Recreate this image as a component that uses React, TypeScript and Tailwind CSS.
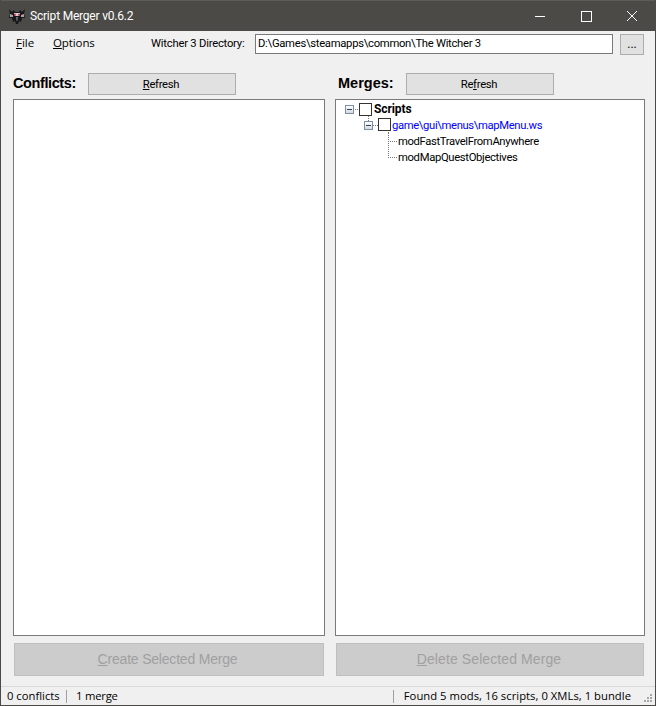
import React from "react";

const ui = "font-['Roboto',sans-serif]";
const lib = "font-['Liberation_Sans',sans-serif]";
const segoe = "font-['Open_Sans',sans-serif]";

function Logo() {
  return (
    <svg width="18" height="18" viewBox="0 0 18 18" className="shrink-0">
      <path d="M1 2 L4 5 L6 3 L7 5 L11 5 L12 3 L14 5 L17 2 L16 7 L17 11 L14 11 L13 15 L11 14 L10 17 L8 17 L7 14 L5 15 L4 11 L1 11 L2 7 Z" fill="#17171c" />
      <path d="M2 7 L5 8 L5 10 L2 10 Z M16 7 L13 8 L13 10 L16 10 Z" fill="#a5a5ad" />
      <path d="M6 6 L12 6 L11 9 L7 9 Z" fill="#d0d0d6" />
      <rect x="6" y="7" width="2" height="1.5" fill="#d8324a" />
      <rect x="10" y="7" width="2" height="1.5" fill="#d8324a" />
      <path d="M8 10 L10 10 L9.5 14 L8.5 14 Z" fill="#6f6f77" />
    </svg>
  );
}

function Expander({ className }: { className: string }) {
  return (
    <span className={`absolute w-[9px] h-[9px] border border-[#7f8ea3] bg-gradient-to-b from-white to-[#d5d9e0] flex items-center justify-center ${className}`}>
      <span className="block w-[5px] h-px bg-[#2b3f66]" />
    </span>
  );
}

function TreeBox({ className }: { className: string }) {
  return <span className={`absolute w-[13px] h-[13px] border border-[#333] bg-white ${className}`} />;
}

function Dots({ className }: { className: string }) {
  return <span className={`absolute border-dotted border-[#777] ${className}`} />;
}

function Tree() {
  return (
    <div className={`relative w-full h-full text-[11.25px] ${ui}`}>
      <Dots className="left-[17px] top-[9px] w-[7px] border-t" />
      <Dots className="left-[32px] top-[16px] h-[9px] border-l" />
      <Expander className="left-[9px] top-[5px]" />
      <TreeBox className="left-[23px] top-[3px]" />
      <span className="absolute left-[38px] top-[1px] text-[12px] leading-[16px] font-bold text-black tracking-[-0.1px]">Scripts</span>

      <Dots className="left-[37px] top-[25px] w-[5px] border-t" />
      <Dots className="left-[52px] top-[32px] h-[26px] border-l" />
      <Expander className="left-[28px] top-[21px]" />
      <TreeBox className="left-[42px] top-[18px]" />
      <span className="absolute left-[56px] top-[18px] leading-[16px] text-[#0000ff] tracking-[-0.36px]">game\gui\menus\mapMenu.ws</span>

      <Dots className="left-[52px] top-[41px] w-[9px] border-t" />
      <span className="absolute left-[62px] top-[34px] leading-[16px] text-black tracking-[-0.35px]">modFastTravelFromAnywhere</span>
      <Dots className="left-[52px] top-[57px] w-[9px] border-t" />
      <span className="absolute left-[62px] top-[50px] leading-[16px] text-black tracking-[-0.33px]">modMapQuestObjectives</span>
    </div>
  );
}

function RefreshButton({ children }: { children: React.ReactNode }) {
  return (
    <button className={`w-[148px] h-[22px] border border-[#adadad] bg-[#e1e1e1] pr-[2px] pt-px text-[11.25px] tracking-[-0.3px] leading-[20px] text-black text-center ${ui}`}>
      {children}
    </button>
  );
}

function BigButton({ children, className }: { children: React.ReactNode; className: string }) {
  return (
    <button className={`h-[33px] mx-px border border-[#bfbfbf] bg-[#cccccc] text-[14px] leading-[31px] text-[#a0a0a0] text-center ${lib} ${className}`}>
      {children}
    </button>
  );
}

export default function App() {
  return (
    <div className="w-[656px] h-[706px] flex flex-col bg-[#f0f0f0] overflow-hidden border border-t-0 border-[#4b4a47]">
      {/* title bar */}
      <div className="h-[31px] -mx-px bg-[#4b4a47] flex items-center shrink-0 border-t border-[#5d5c59]">
        <div className="pl-[8px] pr-[4px]"><Logo /></div>
        <span className={`text-[12px] text-white tracking-[-0.2px] ${ui}`}>Script Merger v0.6.2</span>
        <div className="ml-auto flex items-center text-white pr-px">
          <div className="w-[46px] h-[30px] flex items-center justify-center">
            <span className="block w-[10px] h-px bg-white" />
          </div>
          <div className="w-[46px] h-[30px] flex items-center justify-center">
            <span className="block w-[11px] h-[11px] border border-white" />
          </div>
          <div className="w-[46px] h-[30px] flex items-center justify-center">
            <svg width="12" height="12" viewBox="0 0 12 12"><path d="M1 1 L11 11 M11 1 L1 11" stroke="#fff" strokeWidth="1" /></svg>
          </div>
        </div>
      </div>

      {/* menu + directory */}
      <div className="h-[24px] flex items-center shrink-0 mt-[1px] pl-[15px] pr-[11px] text-[11.25px] text-black">
        <span className={`${segoe} leading-[16px] -mt-[2px] w-[37px] text-[11.5px]`}><u>F</u>ile</span>
        <span className={`${segoe} leading-[16px] -mt-[2px] w-[98px] text-[11.5px] tracking-[-0.1px]`}><u>O</u>ptions</span>
        <span className={`${ui} w-[104px] shrink-0 tracking-[-0.22px] whitespace-nowrap`}>Witcher 3 Directory:</span>
        <div className={`w-[358px] shrink-0 h-[20px] bg-white border border-[#7a7a7a] px-[2px] leading-[18px] tracking-[-0.28px] whitespace-nowrap ${ui}`}>
          D:\Games\steamapps\common\The Witcher 3
        </div>
        <button className={`ml-[7px] w-[24px] shrink-0 h-[21px] border border-[#adadad] bg-[#e1e1e1] text-[12px] leading-[18px] ${ui}`}>...</button>
      </div>

      {/* panels */}
      <div className="flex-1 min-h-0 grid grid-cols-[312px_310px] gap-x-[10px] pl-[12px] pt-[17px]">
        <div className="flex flex-col min-h-0">
          <div className="h-[22px] flex items-center">
            <span className={`text-[14.5px] font-bold w-[75px] whitespace-nowrap text-black tracking-[-0.4px] ${lib}`}>Conflicts:</span>
            <RefreshButton><u>R</u>efresh</RefreshButton>
          </div>
          <div className="mt-[4px] flex-1 bg-white border border-[#7a7a7a]" />
          <div className="mt-[7px] mb-[10px] flex flex-col"><BigButton className="tracking-[-0.2px] pr-[3px]"><u>C</u>reate Selected Merge</BigButton></div>
        </div>
        <div className="flex flex-col min-h-0">
          <div className="h-[22px] flex items-center">
            <span className={`text-[14.5px] font-bold ml-[3px] w-[68px] whitespace-nowrap text-black ${lib}`}>Merges:</span>
            <RefreshButton>Re<u>f</u>resh</RefreshButton>
          </div>
          <div className="mt-[4px] flex-1 bg-white border border-[#7a7a7a]"><Tree /></div>
          <div className="mt-[7px] mb-[10px] flex flex-col"><BigButton className="tracking-[0.1px] pr-[2px]"><u>D</u>elete Selected Merge</BigButton></div>
        </div>
      </div>

      {/* status bar */}
      <div className={`relative h-[19px] shrink-0 border-t border-[#dadada] flex items-center text-[11.25px] text-black ${segoe}`}>
        <span className="pl-[6px] w-[65px] whitespace-nowrap">0 conflicts</span>
        <span className="block w-px h-[13px] bg-[#a0a0a0]" />
        <span className="pl-[9px] whitespace-nowrap tracking-[-0.2px]">1 merge</span>
        <span className="ml-auto block w-px h-[13px] bg-[#a0a0a0]" />
        <span className="pl-[10px] pr-[24px] whitespace-nowrap tracking-[0.03px]">Found 5 mods, 16 scripts, 0 XMLs, 1 bundle</span>
        <svg width="10" height="10" viewBox="0 0 10 10" className="absolute right-[2px] bottom-[2px]">
          <g fill="#a8a8a8">
            <rect x="7" y="1" width="2" height="2" />
            <rect x="4" y="4" width="2" height="2" />
            <rect x="7" y="4" width="2" height="2" />
            <rect x="1" y="7" width="2" height="2" />
            <rect x="4" y="7" width="2" height="2" />
            <rect x="7" y="7" width="2" height="2" />
          </g>
        </svg>
      </div>
    </div>
  );
}
